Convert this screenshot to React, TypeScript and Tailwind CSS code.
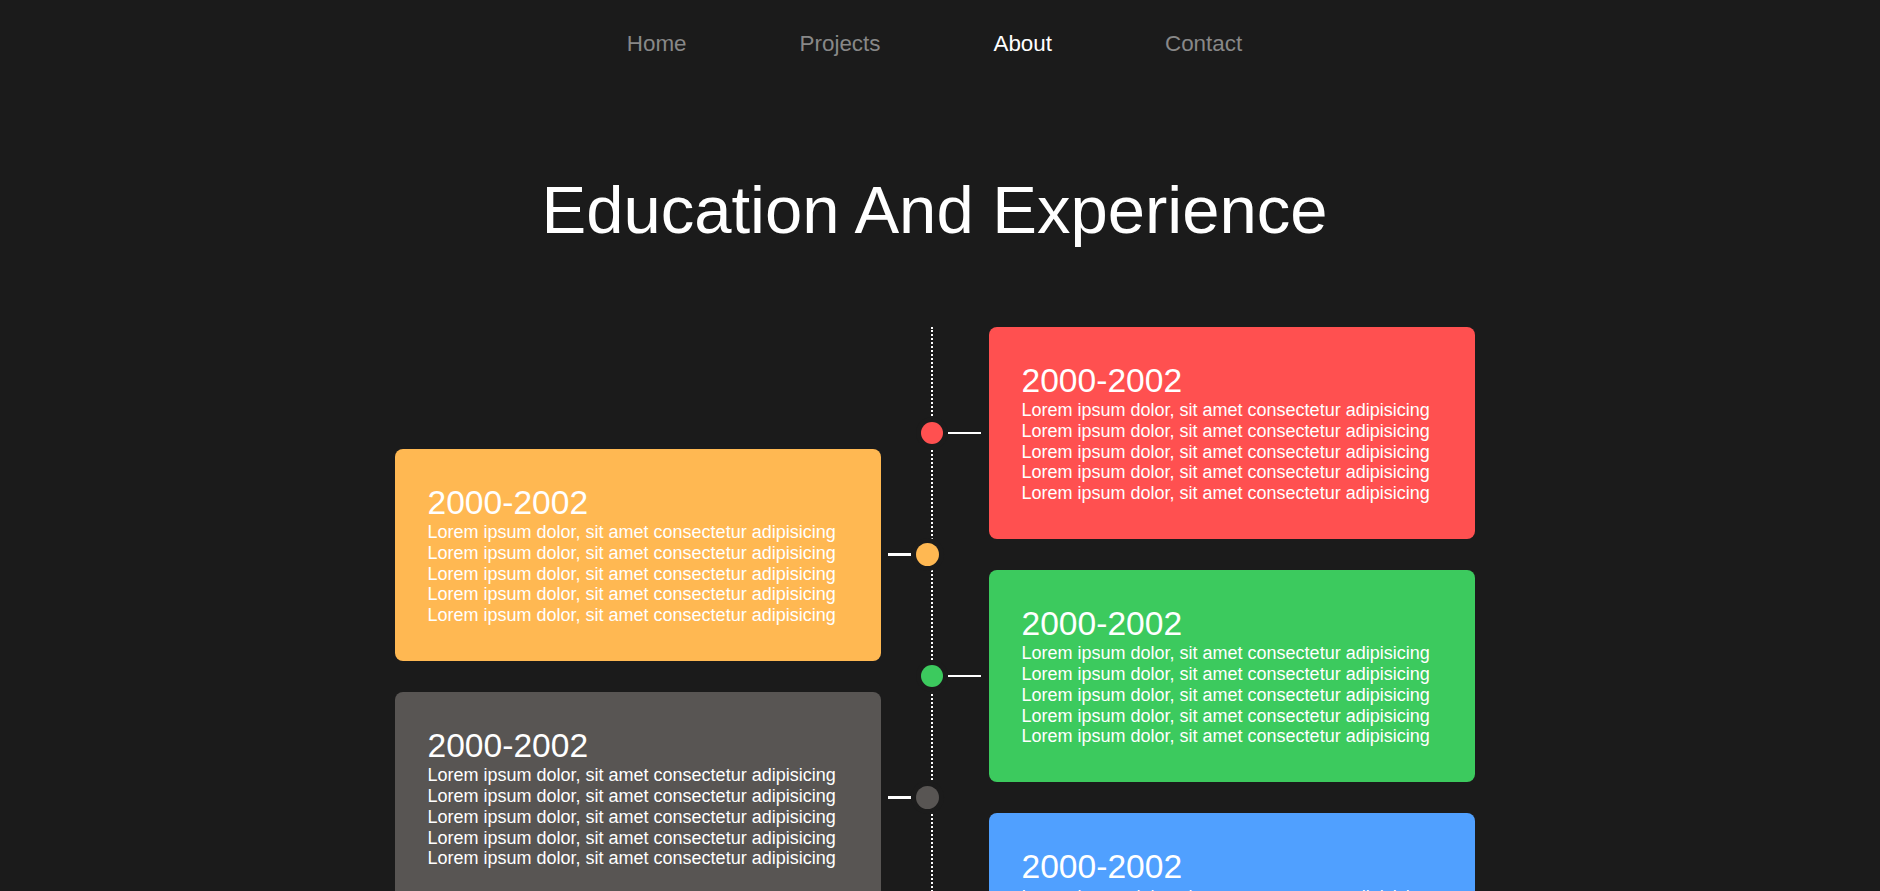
import React from 'react';

interface Entry {
  years: string;
  color: string;
}

const LINE = 'Lorem ipsum dolor, sit amet consectetur adipisicing';

const rightEntries: Entry[] = [
  { years: '2000-2002', color: 'bg-[#ff5050]' },
  { years: '2000-2002', color: 'bg-[#3cca5e]' },
  { years: '2000-2002', color: 'bg-[#50a0ff]' },
];

const leftEntries: Entry[] = [
  { years: '2000-2002', color: 'bg-[#ffb852]' },
  { years: '2000-2002', color: 'bg-[#585553]' },
  { years: '2000-2002', color: 'bg-[#b05cff]' },
];

const Card: React.FC<{ entry: Entry }> = ({ entry }) => (
  <div className={`w-[486px] rounded-lg pt-[35px] pb-[35px] pl-[33px] text-white ${entry.color}`}>
    <h3 className="text-[33.6px] leading-[1.15] font-normal">{entry.years}</h3>
    {[0, 1, 2, 3, 4].map((i) => (
      <p key={i} className="text-[18px] leading-[1.15]">
        {LINE}
      </p>
    ))}
  </div>
);

// right side: dot, connector, card
const RightItem: React.FC<{ entry: Entry }> = ({ entry }) => (
  <div className="flex items-center">
    <span className={`w-[22px] h-[22px] shrink-0 rounded-full shadow-[0_0_0_5px_#1b1b1b] ${entry.color}`} />
    <span className="ml-[5px] mr-[8px] w-[33px] h-[2px] bg-white" />
    <Card entry={entry} />
  </div>
);

// left side: card, connector, dot
const LeftItem: React.FC<{ entry: Entry }> = ({ entry }) => (
  <div className="flex items-center">
    <Card entry={entry} />
    <span className="ml-[7px] mr-[5px] w-[23px] h-[3px] bg-white" />
    <span className={`w-[23px] h-[23px] shrink-0 rounded-full shadow-[0_0_0_5px_#1b1b1b] ${entry.color}`} />
  </div>
);

const App: React.FC = () => {
  const links = ['Home', 'Projects', 'About', 'Contact'];

  return (
    <div className="min-h-screen bg-[#1b1b1b] pr-[11px] pb-[80px] font-['Liberation_Sans',Arial,sans-serif]">
      {/* Nav */}
      <nav className="flex justify-center gap-[113px] pt-[31px]">
        {links.map((l) => (
          <a
            key={l}
            href="#"
            className={`text-[22.4px] leading-[1.15] ${l === 'About' ? 'text-white' : 'text-[#888888]'}`}
          >
            {l}
          </a>
        ))}
      </nav>

      {/* Title */}
      <h1 className="mt-[114px] text-center text-[67px] leading-[77px] font-normal text-white">
        Education And Experience
      </h1>

      {/* Timeline */}
      <div className="relative mx-auto mt-[79px] w-[1080px] grid">
        <div className="absolute left-[536px] top-0 bottom-0 border-l-2 border-dotted border-white" />

        <div className="relative col-start-1 row-start-1 justify-self-start flex flex-col gap-[31px] pt-[122px]">
          {leftEntries.map((e, i) => (
            <LeftItem key={i} entry={e} />
          ))}
        </div>

        <div className="relative col-start-1 row-start-1 justify-self-end flex flex-col gap-[31px]">
          {rightEntries.map((e, i) => (
            <RightItem key={i} entry={e} />
          ))}
        </div>
      </div>
    </div>
  );
};

export default App;
